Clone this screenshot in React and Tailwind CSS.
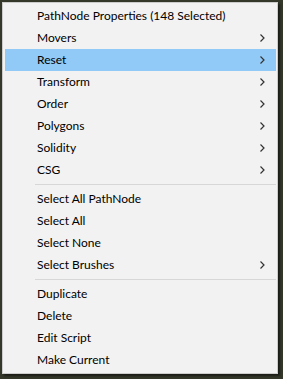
import React from 'react';

const sections = [
  [
    { label: 'PathNode Properties (148 Selected)' },
    { label: 'Movers', sub: true },
    { label: 'Reset', sub: true, active: true },
    { label: 'Transform', sub: true },
    { label: 'Order', sub: true },
    { label: 'Polygons', sub: true },
    { label: 'Solidity', sub: true },
    { label: 'CSG', sub: true },
  ],
  [
    { label: 'Select All PathNode' },
    { label: 'Select All' },
    { label: 'Select None' },
    { label: 'Select Brushes', sub: true },
  ],
  [
    { label: 'Duplicate' },
    { label: 'Delete' },
    { label: 'Edit Script' },
    { label: 'Make Current' },
  ],
];

function Chevron() {
  return (
    <svg width="5" height="8" viewBox="0 0 5 8" className="shrink-0">
      <path d="M0.5 0.5 L4 4 L0.5 7.5" fill="none" stroke="#333" strokeWidth="1.2" />
    </svg>
  );
}

function Row({ item }) {
  return (
    <div
      className={`flex h-[22px] items-center pl-[32px] pr-[11px] ${
        item.active ? 'bg-[#91c9f7]' : ''
      }`}
    >
      <span className="flex-1 text-[12px] text-black">{item.label}</span>
      {item.sub && <Chevron />}
    </div>
  );
}

export default function App() {
  return (
    <div
      className="h-[379px] w-[283px] overflow-hidden bg-[#34382b] pl-[2px] pt-[2px]"
      style={{ fontFamily: 'Lato, "Noto Sans", sans-serif' }}
    >
      <div className="w-[276px] border border-[#cccccc] bg-[#f2f2f2] py-[2px] pl-[2px] pr-[1px] shadow-[2px_2px_2px_rgba(0,0,0,0.5)]">
        {sections.map((items, i) => (
          <div key={i}>
            {i > 0 && (
              <div className="flex h-[7px] items-center pl-[30px]">
                <div className="h-px w-full bg-[#d7d7d7]" />
              </div>
            )}
            {items.map((item) => (
              <Row key={item.label} item={item} />
            ))}
          </div>
        ))}
      </div>
    </div>
  );
}
